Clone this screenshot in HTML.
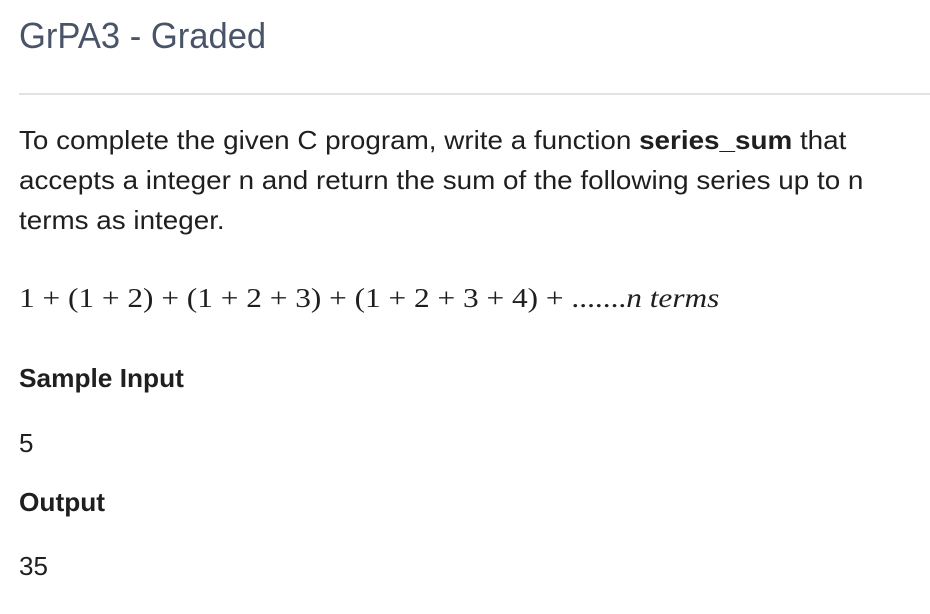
<!DOCTYPE html>
<html><head><style>
body{margin:0;background:#fff;width:930px;height:614px;overflow:hidden;font-family:"Liberation Sans",sans-serif;color:#1f1f1f;}
.t{position:absolute;left:19px;white-space:nowrap;transform-origin:left;}
h1{position:absolute;left:19px;top:15px;margin:0;font-size:36px;font-weight:normal;color:#4a5468;transform:scaleX(0.96);transform-origin:left;}
.hr{position:absolute;left:19px;right:0;top:93px;height:2px;background:#e2e2e2;}
.m{font-family:"Liberation Serif",serif;font-size:27px;}
</style></head><body>
<h1>GrPA3 - Graded</h1>
<div class="hr"></div>
<div class="t" style="top:120px;line-height:40px;font-size:26px;transform:scaleX(1.07);">
To complete the given C program, write a function <b>series_sum</b> that<br>
accepts a integer n and return the sum of the following series up to n<br>
terms as integer.</div>
<div class="t m" style="top:283px;transform:scaleX(1.16);">1 + (1 + 2) + (1 + 2 + 3) + (1 + 2 + 3 + 4) + .......<i>n terms</i></div>
<div class="t" style="top:363px;font-size:26px;font-weight:bold;transform:scaleX(1.01);">Sample Input</div>
<div class="t" style="top:428px;font-size:26px;">5</div>
<div class="t" style="top:487px;font-size:26px;font-weight:bold;transform:scaleX(1.01);">Output</div>
<div class="t" style="top:551px;font-size:26px;">35</div>
</body></html>
